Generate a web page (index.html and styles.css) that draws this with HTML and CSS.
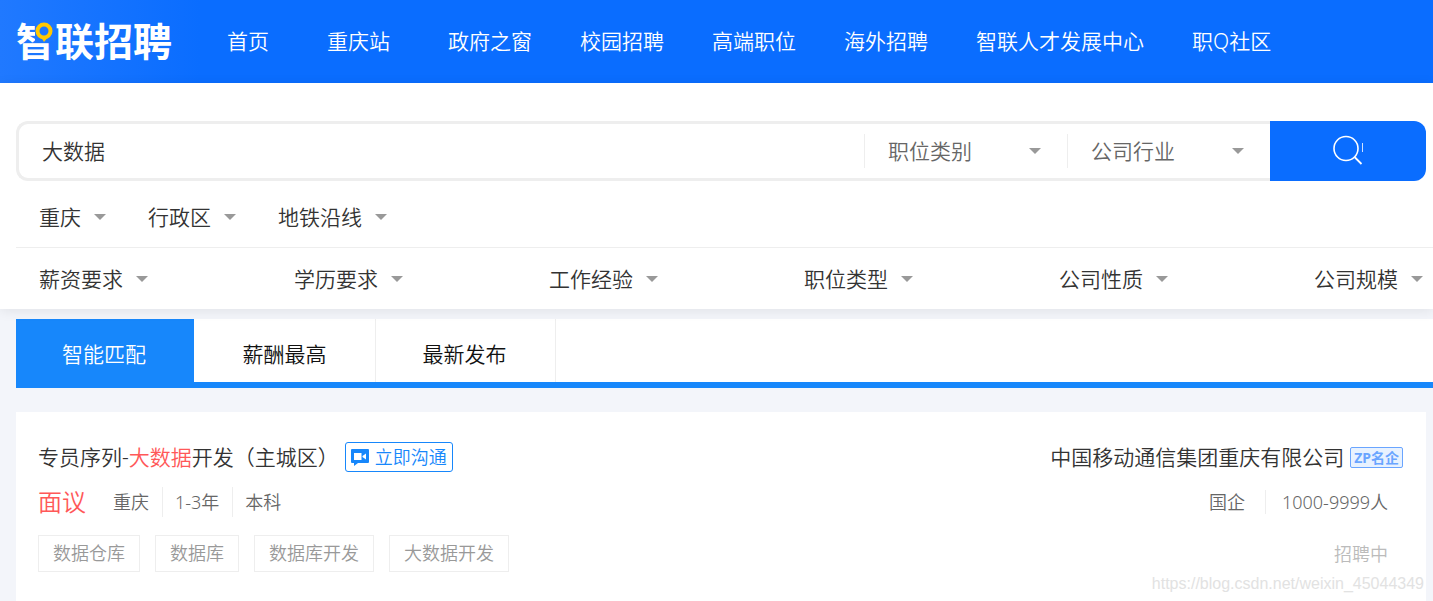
FILE: index.html
```html
<!DOCTYPE html>
<html lang="zh-CN">
<head>
<meta charset="utf-8">
<title>智联招聘</title>
<link rel="stylesheet" href="styles.css">
</head>
<body>
<header class="header">
  <a class="logo" href="#">智联招聘
    <svg class="logo-pin" width="19" height="21" viewBox="0 0 19 21" aria-hidden="true">
      <path class="pin-gap" d="M0 0H19V19H0Z"/>
      <path class="pin-tail" d="M6 15L9 20L14 14Z"/>
      <circle class="pin-ring" cx="9" cy="9" r="6.500"/>
    </svg>
  </a>
  <nav class="nav">
    <a class="nav-link nav-short" href="#">首页</a>
    <a class="nav-link nav-short" href="#">重庆站</a>
    <a class="nav-link" href="#">政府之窗</a>
    <a class="nav-link" href="#">校园招聘</a>
    <a class="nav-link" href="#">高端职位</a>
    <a class="nav-link" href="#">海外招聘</a>
    <a class="nav-link" href="#">智联人才发展中心</a>
    <a class="nav-link" href="#">职Q社区</a>
  </nav>
</header>

<section class="filters">
  <form class="search">
    <div class="search-box">
      <input class="search-input" type="text" value="大数据" aria-label="搜索职位">
      <label class="search-pick"><select class="select" aria-label="职位类别"><option>职位类别</option></select></label>
      <label class="search-pick"><select class="select" aria-label="公司行业"><option>公司行业</option></select></label>
    </div>
    <button class="search-btn" type="button" aria-label="搜索">
      <svg width="32" height="32" viewBox="0 0 32 32" fill="none" stroke="#fff" aria-hidden="true">
        <ellipse cx="14" cy="13.500" rx="12" ry="12" stroke-width="1.600"/>
        <path d="M22.500 22L29.500 29" stroke-width="1.800"/>
        <path d="M30.500 8V17" stroke-width="1" opacity=".8"/>
      </svg>
    </button>
  </form>
  <div class="row row-area">
    <label class="pick"><select class="select" aria-label="城市"><option>重庆</option></select></label>
    <label class="pick"><select class="select" aria-label="行政区"><option>行政区</option></select></label>
    <label class="pick"><select class="select" aria-label="地铁沿线"><option>地铁沿线</option></select></label>
  </div>
  <div class="row row-more">
    <label class="pick"><select class="select" aria-label="薪资要求"><option>薪资要求</option></select></label>
    <label class="pick"><select class="select" aria-label="学历要求"><option>学历要求</option></select></label>
    <label class="pick"><select class="select" aria-label="工作经验"><option>工作经验</option></select></label>
    <label class="pick"><select class="select" aria-label="职位类型"><option>职位类型</option></select></label>
    <label class="pick"><select class="select" aria-label="公司性质"><option>公司性质</option></select></label>
    <label class="pick"><select class="select" aria-label="公司规模"><option>公司规模</option></select></label>
  </div>
</section>

<main class="results">
  <div class="tabs">
    <button class="tab tab-active" type="button">智能匹配</button>
    <button class="tab" type="button">薪酬最高</button>
    <button class="tab" type="button">最新发布</button>
  </div>
  <article class="job">
    <div class="job-main">
      <div class="job-head">
        <a class="job-title" href="#">专员序列-<em class="hit">大数据</em>开发（主城区）</a>
        <button class="chat" type="button">
          <svg width="18" height="17" viewBox="0 0 18 17" aria-hidden="true">
            <path d="M1 0H17Q18 0 18 1V13Q18 14 17 14H7L3 17V14H1Q0 14 0 13V1Q0 0 1 0Z" fill="#1787fb"/>
            <path d="M3 4H10.500V11H3ZM11.500 7L15 4.500V10.500L11.500 8Z" fill="#fff"/>
          </svg>立即沟通</button>
      </div>
      <div class="job-info">
        <strong class="salary">面议</strong>
        <ul class="facts">
          <li class="fact">重庆</li>
          <li class="fact">1-3年</li>
          <li class="fact">本科</li>
        </ul>
      </div>
      <ul class="tags">
        <li class="tag">数据仓库</li>
        <li class="tag">数据库</li>
        <li class="tag">数据库开发</li>
        <li class="tag">大数据开发</li>
      </ul>
    </div>
    <div class="job-company">
      <div class="job-head">
        <a class="job-title" href="#">中国移动通信集团重庆有限公司</a>
        <span class="badge">ZP名企</span>
      </div>
      <ul class="company-facts">
        <li>国企</li>
        <li class="company-size">1000-9999人</li>
      </ul>
      <span class="status">招聘中</span>
    </div>
    <span class="watermark">https://blog.csdn.net/weixin_45044349</span>
  </article>
</main>
</body>
</html>
```

FILE: styles.css
```css
* { box-sizing: border-box; }

body {
  margin: 0;
  background: #f3f5fa;
  color: #333;
  font: 350 21px/32px "Noto Sans", "Noto Sans CJK SC", sans-serif;
}

a { color: inherit; text-decoration: none; }
ul { list-style: none; margin: 0; padding: 0; }
button, input, select { font: inherit; color: inherit; }
button { cursor: pointer; }

/* header */
.header {
  display: flex;
  align-items: center;
  height: 83px;
  padding: 0 0 2px 16px;
  background: linear-gradient(90deg, #2079ff 0, #0a6dff 200px);
  color: #fff;
}
.logo {
  position: relative;
  font-size: 39px;
  font-weight: 700;
  line-height: 48px;
  white-space: nowrap;
}
.logo-pin { position: absolute; left: 19px; top: 5px; }
.pin-gap { fill: #1c77ff; }
.pin-tail { fill: #ffc800; }
.pin-ring { fill: none; stroke: #ffc800; stroke-width: 4; }
.nav { display: flex; gap: 48px; margin-left: 55px; white-space: nowrap; }
.nav-short { padding-right: 10px; }

/* search and filters */
.filters {
  position: relative;
  padding: 38px 0 0 16px;
  background: #fff;
  box-shadow: 0 2px 12px rgba(0, 0, 0, .08);
}
.search { display: flex; height: 60px; margin-right: 7px; }
.search-box {
  display: flex;
  align-items: center;
  flex: 1;
  min-width: 0;
  border: 3px solid #eee;
  border-right: 0;
  border-radius: 12px 0 0 12px;
}
.search-input {
  flex: 1;
  min-width: 0;
  padding: 0 23px;
  border: 0;
  outline: 0;
  background: none;
}
.search-pick {
  display: flex;
  align-items: center;
  justify-content: space-between;
  width: 203px;
  height: 34px;
  padding: 0 26px 0 23px;
  border-left: 1px solid #eee;
  color: #666;
}
.select {
  padding: 0;
  border: 0;
  outline: 0;
  background: none;
  appearance: none;
}
.search-pick::after,
.pick::after {
  content: "";
  border: solid transparent;
  border-width: 6px 6px 0;
  border-top-color: #999;
}
.search-btn {
  display: flex;
  align-items: center;
  justify-content: center;
  width: 156px;
  border: 0;
  border-radius: 0 12px 12px 0;
  background: #0a6dff;
}
.row { display: flex; align-items: center; padding-left: 23px; }
.row-area { height: 67px; gap: 42px; padding-top: 6px; border-bottom: 1px solid #eee; }
.row-more { height: 61px; justify-content: space-between; padding-right: 10px; }
.pick { display: flex; align-items: center; gap: 13px; }

/* result tabs */
.results { padding: 10px 0 0 16px; }
.tabs { display: flex; height: 69px; background: #fff; border-bottom: 6px solid #1787fb; }
.tab {
  width: 180px;
  padding: 6px 2px 0 0;
  border: 0;
  border-right: 1px solid #eee;
  background: none;
  color: #111;
}
.tab-active { border-right: 2px solid #fff; background: #1787fb; color: #fff; }

/* job card */
.job {
  position: relative;
  display: flex;
  justify-content: space-between;
  min-height: 200px;
  margin: 24px 7px 0 0;
  padding: 29px 23px 0 22px;
  background: #fff;
}
.job-head { display: flex; align-items: center; gap: 6px; height: 32px; white-space: nowrap; }
.hit { color: #ff5858; font-style: normal; }
.chat {
  display: flex;
  align-items: center;
  gap: 6px;
  height: 30px;
  padding: 0 5px;
  border: 1px solid #1787fb;
  border-radius: 3px;
  background: none;
  color: #1787fb;
  font-size: 18px;
}
.job-info { display: flex; align-items: center; height: 30px; margin-top: 14px; }
.salary { margin-right: 27px; color: #ff5858; font-size: 24px; font-weight: 350; }
.facts, .company-facts { display: flex; color: #666; font-size: 18px; line-height: 30px; }
.fact + .fact { margin-left: 13px; padding-left: 12px; border-left: 1px solid #eee; }
.tags { display: flex; gap: 15px; margin-top: 18px; }
.tag {
  padding: 0 14px;
  border: 1px solid #eee;
  color: #999;
  font-size: 18px;
  line-height: 35px;
}
.job-company { display: flex; flex-direction: column; align-items: flex-end; }
.badge {
  padding: 0 3px;
  border: 1px solid #6aa5ff;
  border-radius: 2px;
  background: #e8f2ff;
  color: #6aa5ff;
  font-size: 14px;
  font-weight: 700;
  line-height: 19px;
}
.company-facts { align-items: center; margin: 14px 15px 0 0; }
.company-size {
  margin-left: 20px;
  padding-left: 16px;
  border-left: 1px solid #eee;
  line-height: 24px;
}
.status { margin: 21px 15px 0 0; color: #bbb; font-size: 18px; }
.watermark {
  position: absolute;
  right: 2px;
  bottom: 18px;
  color: #e2e2e2;
  font: 400 16px/20px "Liberation Sans", Arial, sans-serif;
}
```
